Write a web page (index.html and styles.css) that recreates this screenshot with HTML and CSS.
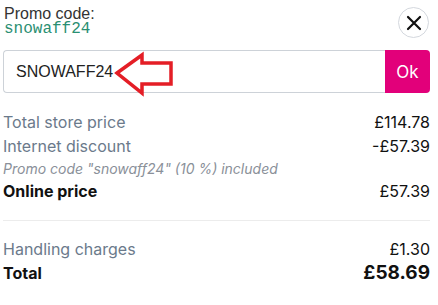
FILE: index.html
```
<!DOCTYPE html>
<html>
<head>
  <meta charset="utf-8">
  <title>Promo code</title>
  <link rel="stylesheet" href="styles.css">
</head>
<body>
  <div class="panel">
    <div class="promo-head">
      <div class="promo-info">
        <div class="promo-label">Promo code:</div>
        <div class="promo-code">snowaff24</div>
      </div>
      <button class="close-btn" aria-label="Close">
        <svg width="16" height="16" viewBox="0 0 16 16">
          <path d="M2 2 L14 14 M14 2 L2 14" stroke="#111" stroke-width="2.2" stroke-linecap="round" fill="none"/>
        </svg>
      </button>
    </div>

    <div class="promo-form">
      <input class="promo-input" type="text" value="SNOWAFF24">
      <button class="ok-btn">Ok</button>
      <svg class="arrow" width="66" height="48" viewBox="0 0 66 48">
        <polygon points="4,23 29,5 29,13 58,13 58,34 29,34 29,43" fill="none" stroke="#e41e26" stroke-width="3.5" stroke-linejoin="miter"/>
      </svg>
    </div>

    <div class="summary">
      <div class="row">
        <span class="label">Total store price</span>
        <span class="price">£114.78</span>
      </div>
      <div class="row">
        <span class="label">Internet discount</span>
        <span class="price">-£57.39</span>
      </div>
      <div class="row note">Promo code "snowaff24" (10 %) included</div>
      <div class="row strong">
        <span>Online price</span>
        <span class="price">£57.39</span>
      </div>
    </div>

    <div class="summary totals">
      <div class="row">
        <span class="label">Handling charges</span>
        <span class="price">£1.30</span>
      </div>
      <div class="row grand">
        <span>Total</span>
        <span class="price">£58.69</span>
      </div>
    </div>
  </div>
</body>
</html>
```

FILE: styles.css
```
body {
  margin: 0;
  background: #fff;
  font-family: Inter, "Noto Sans", sans-serif;
  color: #111;
}
.panel {
  padding: 6px 8px 0 3px;
}
.promo-head {
  display: flex;
  justify-content: space-between;
  align-items: flex-start;
}
.promo-info {
  padding-left: 1px;
}
.promo-label {
  font-family: "Liberation Sans", Arial, sans-serif;
  font-size: 16px;
  line-height: 16px;
  color: #333;
}
.promo-code {
  font-family: "Liberation Mono", "Courier New", monospace;
  font-size: 16px;
  line-height: 14px;
  color: #2a8f72;
}
.close-btn {
  width: 31px;
  height: 31px;
  margin: 1px 1px 0 0;
  border: 1px solid #d4d8de;
  border-radius: 50%;
  background: #fff;
  padding: 0;
  display: flex;
  align-items: center;
  justify-content: center;
}
.promo-form {
  position: relative;
  display: flex;
  margin-top: 12px;
  height: 43px;
}
.promo-input {
  flex: 1;
  box-sizing: border-box;
  height: 43px;
  margin: 0;
  border: 1px solid #cdd2d8;
  border-right: none;
  border-radius: 4px 0 0 4px;
  padding: 0 12px;
  font-family: "Liberation Sans", Arial, sans-serif;
  font-size: 16px;
  color: #222;
  outline: none;
}
.ok-btn {
  width: 45px;
  height: 43px;
  border: none;
  border-radius: 0 4px 4px 0;
  background: #e2007a;
  color: #fff;
  font-family: Inter, sans-serif;
  font-size: 17px;
  padding: 0;
}
.arrow {
  position: absolute;
  left: 110px;
  top: 0;
}
.summary {
  margin-top: 17px;
  padding-bottom: 18px;
  border-bottom: 1px solid #ececec;
}
.totals {
  margin-top: 16px;
  border-bottom: none;
}
.row {
  display: flex;
  justify-content: space-between;
  font-size: 16px;
  line-height: 24px;
}
.label {
  color: #6b7a8b;
}
.note {
  font-size: 14px;
  line-height: 22px;
  font-style: italic;
  color: #8a9099;
}
.strong {
  font-weight: 700;
  line-height: 22px;
}
.strong .price {
  font-weight: 400;
}
.grand {
  font-weight: 700;
}
.grand .price {
  font-size: 19px;
}
```
